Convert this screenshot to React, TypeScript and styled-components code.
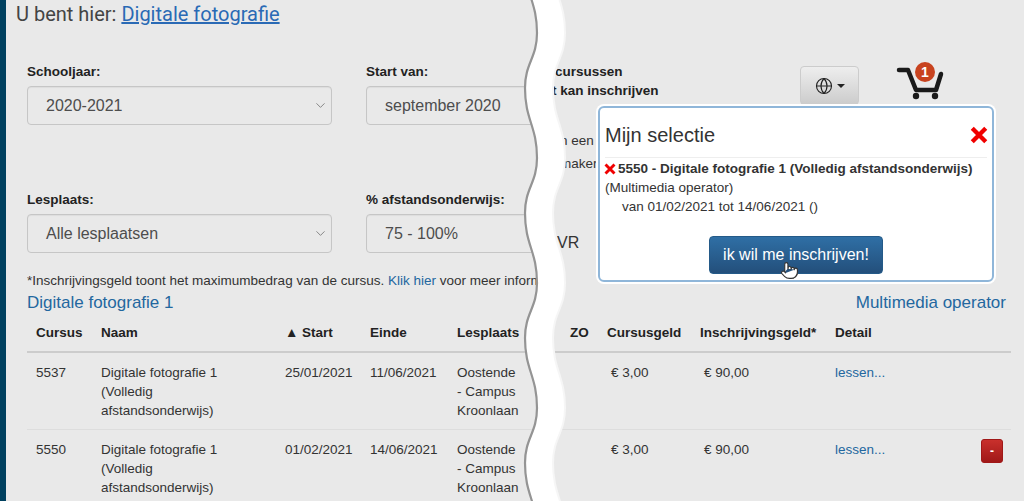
import React from "react";
import styled, { createGlobalStyle } from "styled-components";
import { ChevronDown, Globe, Pointer } from "lucide-react";

const GlobalStyle = createGlobalStyle`
  html, body {
    margin: 0;
    padding: 0;
    background: #fff;
  }
  * {
    box-sizing: border-box;
  }
`;

const courses = [
  { id: "5537", start: "25/01/2021", end: "11/06/2021", removable: false },
  { id: "5550", start: "01/02/2021", end: "14/06/2021", removable: true },
];

// the tear repeats every 125px down the page
function wavePath(offset: number) {
  const high = 537 + offset;
  const low = 525 + offset;
  let d = `M${high} -92`;
  for (let y = -92; y < 520; y += 125) {
    d += ` C${high} ${y + 25} ${low} ${y + 30} ${low} ${y + 55}`;
    d += ` C${low} ${y + 87} ${high} ${y + 93} ${high} ${y + 125}`;
  }
  return d;
}

function Tear() {
  const left = wavePath(0);
  const right = wavePath(28);
  return (
    <TearSvg width="1024" height="501" viewBox="0 0 1024 501">
      <defs>
        <filter id="soft" x="-20%" y="-5%" width="140%" height="110%">
          <feGaussianBlur stdDeviation="0.7" />
        </filter>
        <clipPath id="leftOfRight">
          <path d={`${right} L0 600 L0 -92 Z`} />
        </clipPath>
      </defs>
      <g clipPath="url(#leftOfRight)">
        <path d={`${left} L1024 600 L1024 -92 Z`} fill="#fff" />
      </g>
      <path d={right} fill="none" stroke="#f6f6f6" strokeWidth="2" />
      <path d={left} fill="none" stroke="#949494" strokeWidth="2.2" filter="url(#soft)" />
    </TearSvg>
  );
}

function RedCross({ size }: { size: number }) {
  return (
    <svg width={size} height={size} viewBox="0 0 16 16">
      <path d="M2 2 L14 14 M14 2 L2 14" stroke="#f00000" strokeWidth="3.8" fill="none" />
    </svg>
  );
}

function CartIcon() {
  return (
    <CartWrap>
      <svg width="48" height="42" viewBox="0 0 48 42">
        <path
          d="M3 8 H12 L20 28 H40 L45 12"
          fill="none"
          stroke="#1a1a1a"
          strokeWidth="4.5"
          strokeLinejoin="round"
          strokeLinecap="round"
        />
        <circle cx="20" cy="34" r="3.2" fill="#1a1a1a" />
        <circle cx="39" cy="34" r="3.2" fill="#1a1a1a" />
      </svg>
      <CartBadge>1</CartBadge>
    </CartWrap>
  );
}

function App() {
  return (
    <>
      <GlobalStyle />
      <Page>
        <Breadcrumb>
          U bent hier: <a href="#">Digitale fotografie</a>
        </Breadcrumb>

        <Filters>
          <Field $narrow>
            <FieldLabel>Schooljaar:</FieldLabel>
            <SelectBox>
              2020-2021
              <ChevronDown size={15} strokeWidth={1.2} color="#666" />
            </SelectBox>
          </Field>
          <Field>
            <FieldLabel>Start van:</FieldLabel>
            <SelectBox>september 2020</SelectBox>
          </Field>
          <SideColumn>
            <SideLine $bold $indent={5} $top={1}>cursussen</SideLine>
            <SideLine $bold $indent={2}>t kan inschrijven</SideLine>
            <SideLine $indent={10} $top={31}>n een</SideLine>
            <SideLine $indent={10} $top={4}>maker</SideLine>
            <SideValue>VR</SideValue>
          </SideColumn>
          <Actions>
            <GlobeButton>
              <Globe size={18} strokeWidth={1.5} color="#222" />
              <Caret />
            </GlobeButton>
            <CartIcon />
          </Actions>
          <Field $narrow>
            <FieldLabel>Lesplaats:</FieldLabel>
            <SelectBox>
              Alle lesplaatsen
              <ChevronDown size={15} strokeWidth={1.2} color="#666" />
            </SelectBox>
          </Field>
          <Field>
            <FieldLabel>% afstandsonderwijs:</FieldLabel>
            <SelectBox>75 - 100%</SelectBox>
          </Field>
        </Filters>

        <Note>
          *Inschrijvingsgeld toont het maximumbedrag van de cursus. <a href="#">Klik hier</a> voor meer informatie
        </Note>

        <SectionHead>
          <span>Digitale fotografie 1</span>
          <span>Multimedia operator</span>
        </SectionHead>

        <CourseTable>
          <colgroup>
            <col style={{ width: 65 }} />
            <col style={{ width: 184 }} />
            <col style={{ width: 85 }} />
            <col style={{ width: 87 }} />
            <col style={{ width: 113 }} />
            <col style={{ width: 37 }} />
            <col style={{ width: 93 }} />
            <col style={{ width: 135 }} />
            <col style={{ width: 146 }} />
            <col />
          </colgroup>
          <thead>
            <tr>
              <th>Cursus</th>
              <th>Naam</th>
              <th>▲ Start</th>
              <th>Einde</th>
              <th>Lesplaats</th>
              <th>ZO</th>
              <th>Cursusgeld</th>
              <th>Inschrijvingsgeld*</th>
              <th>Detail</th>
              <th />
            </tr>
          </thead>
          <tbody>
            {courses.map((course) => (
              <tr key={course.id}>
                <td>{course.id}</td>
                <td>Digitale fotografie 1 (Volledig afstandsonderwijs)</td>
                <td>{course.start}</td>
                <td>{course.end}</td>
                <td>
                  Oostende
                  <br />- Campus
                  <br />
                  Kroonlaan
                </td>
                <td />
                <Amount>€ 3,00</Amount>
                <Amount>€ 90,00</Amount>
                <td>
                  <a href="#">lessen...</a>
                </td>
                <td>{course.removable && <RemoveButton>-</RemoveButton>}</td>
              </tr>
            ))}
          </tbody>
        </CourseTable>

        <Tear />

        <Popup>
          <PopupHead>
            Mijn selectie
            <CloseCross>
              <RedCross size={18} />
            </CloseCross>
          </PopupHead>
          <PopupTitle>
            <RedCross size={12} />
            5550 - Digitale fotografie 1 (Volledig afstandsonderwijs)
          </PopupTitle>
          <PopupLine>(Multimedia operator)</PopupLine>
          <PopupDates>van 01/02/2021 tot 14/06/2021 ()</PopupDates>
          <PopupFooter>
            <EnrolButton>ik wil me inschrijven!</EnrolButton>
          </PopupFooter>
          <HandCursor>
            <Pointer size={19} strokeWidth={1.4} color="#333" fill="#fff" />
          </HandCursor>
        </Popup>
      </Page>
    </>
  );
}

const Page = styled.div`
  position: relative;
  width: 1024px;
  height: 501px;
  overflow: hidden;
  background: #e9e9e9;
  border-left: 6px solid #00405f;
  padding-left: 21px;
  padding-right: 13px;
  font-family: "Liberation Sans", Arial, sans-serif;
  font-size: 13.5px;
  color: #333;

  a {
    color: #23679f;
    text-decoration: none;
  }
`;

const Breadcrumb = styled.div`
  height: 28px;
  margin-left: -11px;
  font-family: Roboto, sans-serif;
  font-size: 20px;
  line-height: 28px;
  color: #444;

  a {
    color: #2a6ab5;
    text-decoration: underline;
  }
`;

const Filters = styled.div`
  display: grid;
  grid-template-columns: 339px 184px 250px 200px;
  grid-template-rows: 64px 64px;
  row-gap: 64px;
  margin-top: 33px;
`;

const Field = styled.div<{ $narrow?: boolean }>`
  display: flex;
  flex-direction: column;
  width: ${(props) => (props.$narrow ? "305px" : "100%")};
`;

const FieldLabel = styled.label`
  height: 20px;
  margin-bottom: 5px;
  font-size: 13.5px;
  font-weight: bold;
  line-height: 22px;
  color: #222;
`;

const SelectBox = styled.div`
  display: flex;
  align-items: center;
  justify-content: space-between;
  width: 100%;
  height: 39px;
  padding: 0 3px 0 18px;
  border: 1px solid #c6c6c6;
  border-radius: 4px;
  font-size: 16px;
  color: #4d4d4d;
  box-shadow: inset 0 1px 1px rgba(0, 0, 0, 0.05);
`;

const SideColumn = styled.div`
  grid-column: 3;
  grid-row: 1 / span 2;
  height: 192px;
  overflow: hidden;
`;

const SideLine = styled.div<{ $bold?: boolean; $indent: number; $top?: number }>`
  margin-top: ${(props) => props.$top ?? 0}px;
  margin-left: ${(props) => props.$indent}px;
  font-weight: ${(props) => (props.$bold ? "bold" : "normal")};
  line-height: 19px;
  white-space: nowrap;
  color: ${(props) => (props.$bold ? "#222" : "#333")};
`;

const SideValue = styled.div`
  margin-top: 60px;
  margin-left: 7px;
  font-size: 16px;
  line-height: 20px;
`;

const Actions = styled.div`
  grid-column: 4;
  grid-row: 1;
  display: flex;
  align-items: flex-start;
  gap: 37px;
  padding-top: 1px;
`;

const GlobeButton = styled.button`
  display: flex;
  align-items: center;
  justify-content: center;
  gap: 4px;
  width: 59px;
  height: 39px;
  margin-top: 4px;
  border: 1px solid #ccc;
  border-radius: 4px;
  background: linear-gradient(#eeeeee, #cccccc);
`;

const Caret = styled.span`
  width: 0;
  height: 0;
  border-top: 4px solid #222;
  border-left: 4px solid transparent;
  border-right: 4px solid transparent;
`;

const CartWrap = styled.div`
  position: relative;
  width: 48px;
  height: 42px;
`;

const CartBadge = styled.span`
  position: absolute;
  top: 0;
  left: 19px;
  width: 20px;
  height: 20px;
  border-radius: 50%;
  background: #c8431f;
  color: #fff;
  font-size: 14px;
  font-weight: bold;
  line-height: 20px;
  text-align: center;
`;

const Note = styled.div`
  width: 510px;
  margin-top: 18px;
  overflow: hidden;
  line-height: 20px;
  white-space: nowrap;
  color: #333;
`;

const SectionHead = styled.div`
  display: flex;
  justify-content: space-between;
  width: 979px;
  height: 22px;
  font-size: 17px;
  line-height: 24px;
  color: #23679f;
`;

const CourseTable = styled.table`
  width: 984px;
  border-collapse: collapse;
  table-layout: fixed;

  th {
    height: 39px;
    padding: 0 0 0 9px;
    border-bottom: 2px solid #ccc;
    font-size: 13.5px;
    text-align: left;
    color: #222;
    white-space: nowrap;
  }

  td {
    padding: 10px 9px 9px 9px;
    border-bottom: 1px solid #ddd;
    line-height: 19px;
    vertical-align: top;
    color: #333;
  }
`;

const Amount = styled.td`
  && {
    padding-left: 13px;
  }
`;

const RemoveButton = styled.button`
  display: block;
  width: 22px;
  height: 24px;
  margin-top: -1px;
  padding: 0;
  border: 1px solid #a01818;
  border-radius: 3px;
  background: linear-gradient(#c9302c, #a01818);
  color: #fff;
  font-size: 12px;
  font-weight: bold;
`;

const TearSvg = styled.svg`
  position: absolute;
  top: 0;
  left: -6px;
  pointer-events: none;
`;

const Popup = styled.div`
  position: absolute;
  top: 106px;
  left: 592px;
  width: 396px;
  height: 176px;
  padding: 0 5px;
  border: 2px solid #8fb6d9;
  border-radius: 6px;
  background: #fff;
  box-shadow: 0 0 0 2px #fff;
`;

const PopupHead = styled.div`
  display: flex;
  align-items: center;
  justify-content: space-between;
  height: 50px;
  padding-top: 6px;
  border-bottom: 1px solid #eee;
  font-size: 20px;
  color: #333;
`;

const CloseCross = styled.span`
  display: flex;
  margin: -2px -1px 0 0;
`;

const PopupTitle = styled.div`
  display: flex;
  align-items: center;
  gap: 2px;
  margin: 1px 0 0 -1px;
  font-size: 13.5px;
  font-weight: bold;
  line-height: 19px;
  white-space: pre;
`;

const PopupLine = styled.div`
  line-height: 19px;
  font-size: 13.5px;
`;

const PopupDates = styled(PopupLine)`
  padding-left: 17px;
`;

const PopupFooter = styled.div`
  display: flex;
  justify-content: center;
  margin-top: 20px;
`;

const EnrolButton = styled.button`
  width: 174px;
  height: 38px;
  border: 1px solid #245a88;
  border-radius: 4px;
  background: linear-gradient(#2f6fa5, #234f7b);
  color: #fff;
  font-family: "Liberation Sans", Arial, sans-serif;
  font-size: 16px;
`;

const HandCursor = styled.span`
  position: absolute;
  top: 153px;
  left: 180px;
`;

export default App;
